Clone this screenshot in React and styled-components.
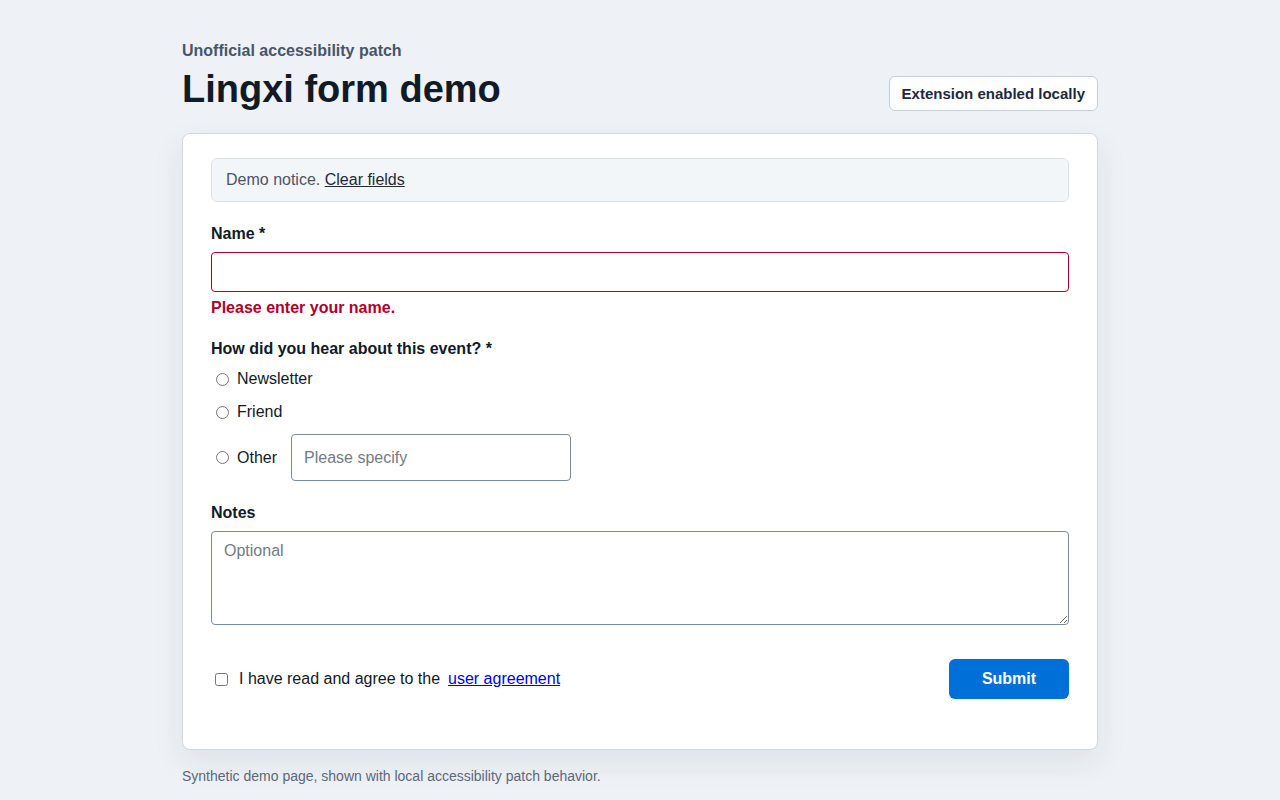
import React from "react";
import styled, { createGlobalStyle } from "styled-components";

const Global = createGlobalStyle`
  * { box-sizing: border-box; }
  html, body { margin: 0; padding: 0; }
  body {
    background: #eef2f6;
    font-family: "Liberation Sans", Arial, sans-serif;
    color: #111827;
  }
`;

const Page = styled.main`
  width: 916px;
  margin: 0 auto;
  padding-top: 41px;
`;

const Header = styled.header`
  display: flex;
  justify-content: space-between;
  align-items: flex-end;
  margin-bottom: 20px;
`;

const Eyebrow = styled.div`
  font-size: 16px;
  line-height: 20px;
  font-weight: 700;
  color: #475569;
`;

const Title = styled.h1`
  margin: 4px 0 0;
  font-size: 38px;
  line-height: 48px;
  font-weight: 700;
  color: #111a27;
`;

const Badge = styled.span`
  display: inline-block;
  margin-bottom: 2px;
  padding: 8px 12px;
  font-size: 15px;
  line-height: 17px;
  font-weight: 700;
  color: #1e293b;
  background: #ffffff;
  border: 1px solid #c3cfdf;
  border-radius: 6px;
`;

const Card = styled.section`
  background: #ffffff;
  border: 1px solid #cfd8e3;
  border-radius: 8px;
  padding: 24px 28px 50px;
  box-shadow: 0 12px 32px rgba(30, 41, 59, 0.08);
`;

const Notice = styled.div`
  background: #f3f6f9;
  border: 1px solid #dde4ec;
  border-radius: 6px;
  padding: 11px 14px;
  font-size: 16px;
  line-height: 20px;
  color: #4b5563;
`;

const NoticeLink = styled.a`
  color: #1f2937;
  text-decoration: underline;
`;

const Label = styled.div`
  margin-top: ${(p) => p.$top || 22}px;
  font-size: 16px;
  line-height: 20px;
  font-weight: 700;
  color: #111a27;
`;

const TextInput = styled.input`
  display: block;
  width: ${(p) => p.$width || "100%"};
  height: ${(p) => p.$height || 40}px;
  margin-top: ${(p) => (p.$inline ? 0 : 8)}px;
  padding: 0 12px;
  font-family: "Liberation Sans", Arial, sans-serif;
  font-size: 16px;
  color: #111827;
  background: #ffffff;
  border: 1px solid ${(p) => (p.$error ? "#b0002a" : "#7b8ba0")};
  border-radius: 4px;
  outline: none;
  &::placeholder { color: #737b86; }
`;

const ErrorText = styled.div`
  margin-top: 6px;
  font-size: 16px;
  line-height: 20px;
  font-weight: 700;
  color: #b0002a;
`;

const Options = styled.div`
  display: flex;
  flex-direction: column;
  gap: 9px;
  margin-top: 8px;
`;

const OptionRow = styled.label`
  display: flex;
  align-items: center;
  min-height: 24px;
  margin-top: ${(p) => p.$top || 0}px;
  font-size: 16px;
  color: #111a27;
`;

const Radio = styled.input.attrs({ type: "radio" })`
  width: 13px;
  height: 13px;
  margin: 0 8px 0 5px;
`;

const OptionText = styled.span`
  margin-right: ${(p) => p.$gap || 0}px;
`;

const TextArea = styled.textarea`
  display: block;
  width: 100%;
  height: 94px;
  margin-top: 8px;
  padding: 9px 12px;
  font-family: "Liberation Sans", Arial, sans-serif;
  font-size: 16px;
  line-height: 20px;
  color: #111827;
  border: 1px solid #7b8ba0;
  border-radius: 4px;
  outline: none;
  resize: vertical;
  &::placeholder { color: #737b86; }
`;

const Footer = styled.div`
  display: flex;
  justify-content: space-between;
  align-items: center;
  margin-top: 34px;
`;

const Agree = styled.label`
  display: flex;
  align-items: center;
  font-size: 16px;
  color: #111a27;
`;

const Checkbox = styled.input.attrs({ type: "checkbox" })`
  width: 13px;
  height: 13px;
  margin: 0 11px 0 4px;
`;

const AgreeLink = styled.a`
  margin-left: 8px;
  color: #0000ee;
  text-decoration: underline;
`;

const Submit = styled.button`
  width: 120px;
  height: 40px;
  border: none;
  border-radius: 6px;
  background: #0070d8;
  color: #ffffff;
  font-family: "Liberation Sans", Arial, sans-serif;
  font-size: 16px;
  font-weight: 700;
  cursor: pointer;
`;

const Note = styled.p`
  margin: 16px 0 0;
  font-size: 14px;
  line-height: 20px;
  color: #5b6779;
`;

export default function App() {
  return (
    <>
      <Global />
      <Page>
        <Header>
          <div>
            <Eyebrow>Unofficial accessibility patch</Eyebrow>
            <Title>Lingxi form demo</Title>
          </div>
          <Badge>Extension enabled locally</Badge>
        </Header>
        <Card>
          <Notice>
            Demo notice. <NoticeLink href="#">Clear fields</NoticeLink>
          </Notice>

          <Label>Name *</Label>
          <TextInput $error aria-invalid="true" />
          <ErrorText>Please enter your name.</ErrorText>

          <Label $top={21}>How did you hear about this event? *</Label>
          <Options>
            <OptionRow>
              <Radio name="src" />
              <OptionText>Newsletter</OptionText>
            </OptionRow>
            <OptionRow>
              <Radio name="src" />
              <OptionText>Friend</OptionText>
            </OptionRow>
            <OptionRow $top={1}>
              <Radio name="src" />
              <OptionText $gap={14}>Other</OptionText>
              <TextInput $inline $width="280px" $height={47} placeholder="Please specify" />
            </OptionRow>
          </Options>

          <Label>Notes</Label>
          <TextArea placeholder="Optional" />

          <Footer>
            <Agree>
              <Checkbox />
              I have read and agree to the
              <AgreeLink href="#">user agreement</AgreeLink>
            </Agree>
            <Submit type="button">Submit</Submit>
          </Footer>
        </Card>
        <Note>Synthetic demo page, shown with local accessibility patch behavior.</Note>
      </Page>
    </>
  );
}
